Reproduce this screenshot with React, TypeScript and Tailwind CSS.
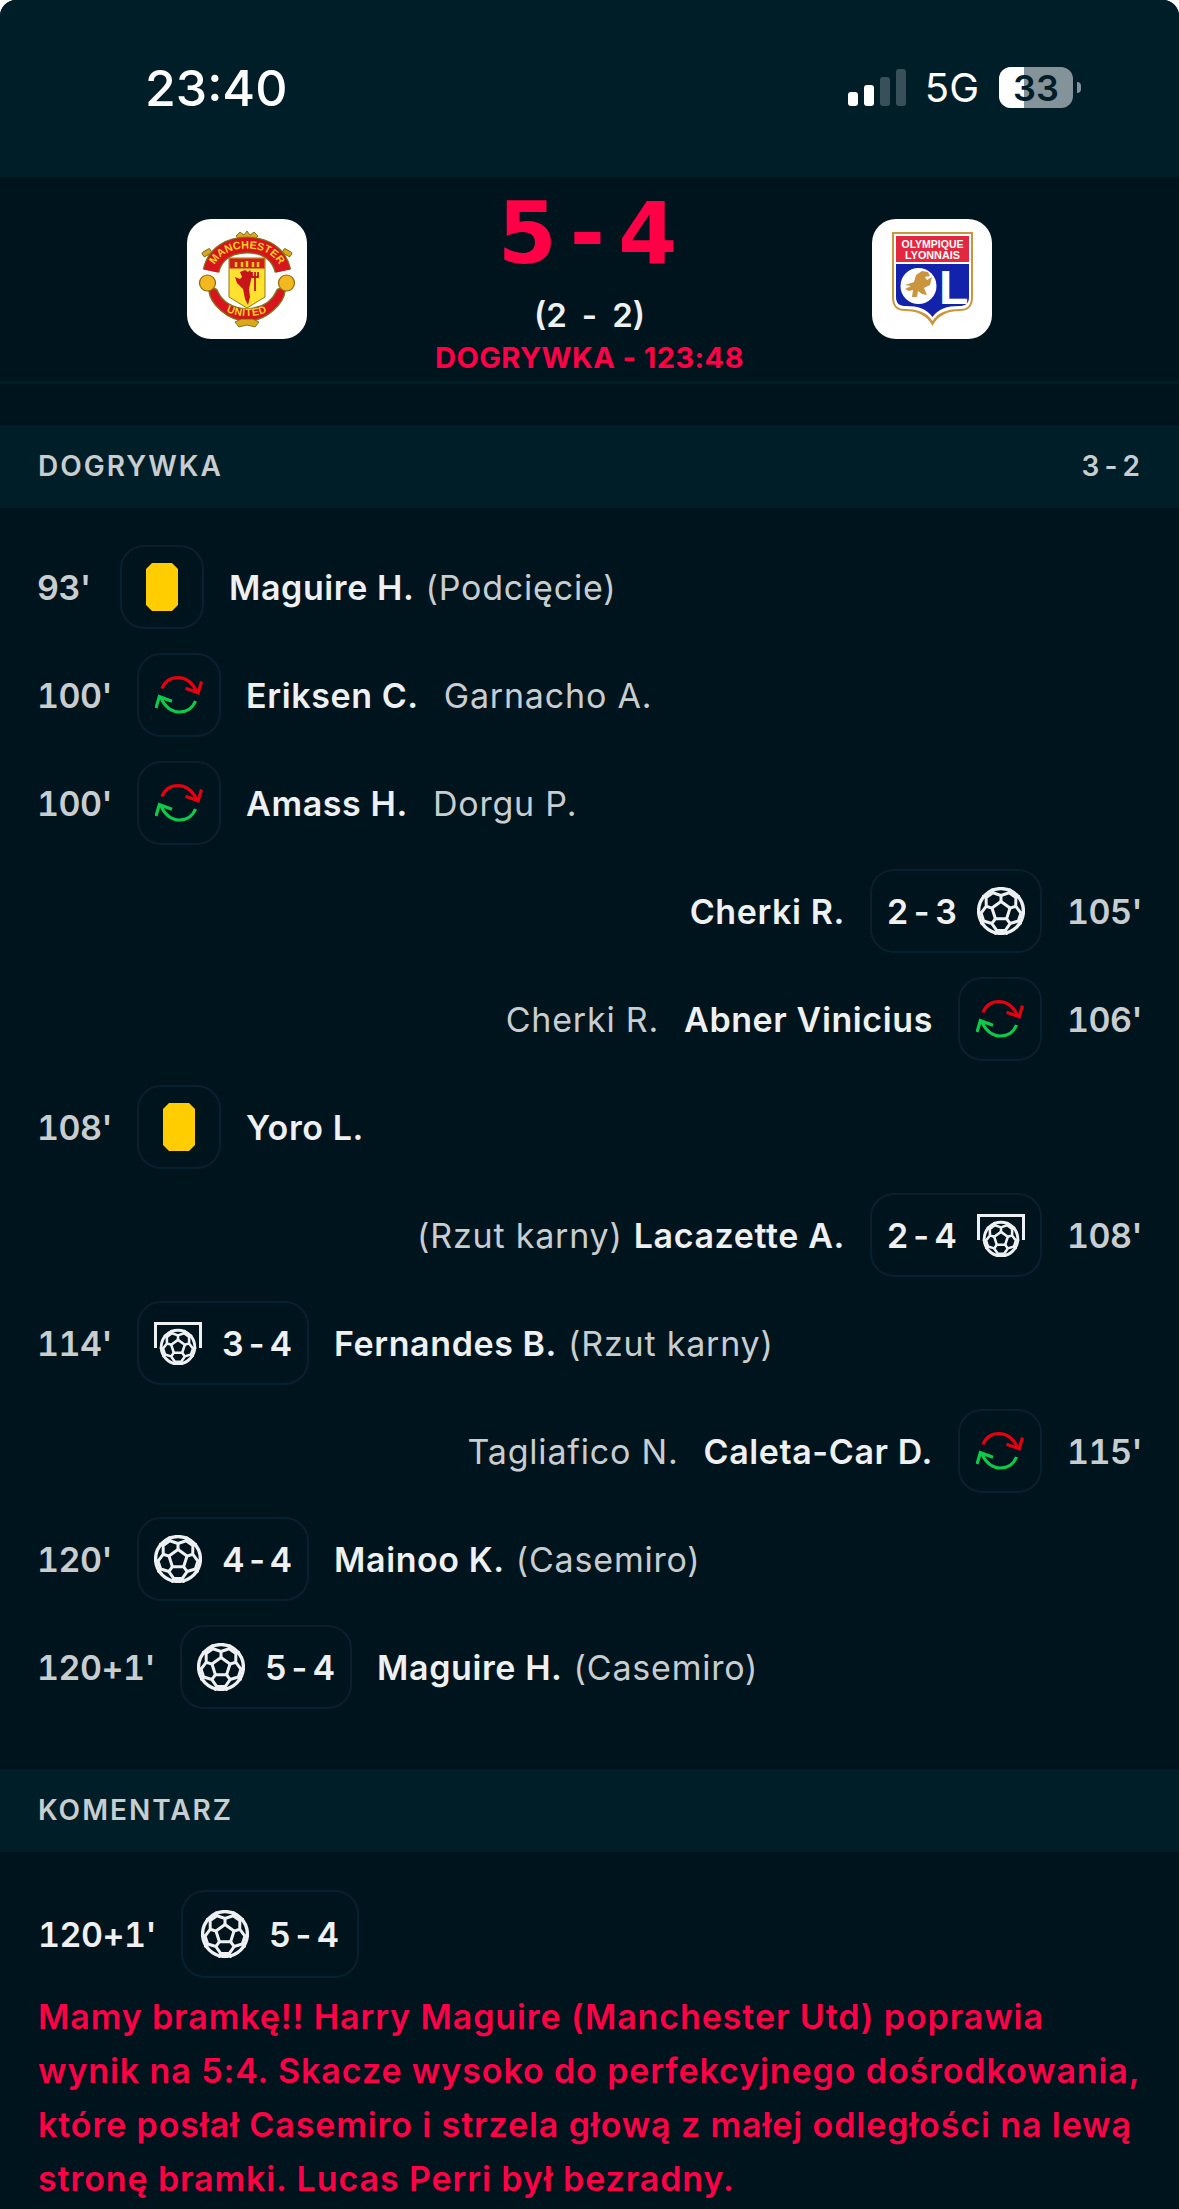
import React from "react";

const pt = (r: number, deg: number) => {
  const a = ((deg - 90) * Math.PI) / 180;
  return `${(24 + r * Math.cos(a)).toFixed(2)} ${(24 + r * Math.sin(a)).toFixed(2)}`;
};
const angles = [0, 72, 144, 216, 288];
const pent = angles.map((a) => pt(9.5, a)).join(" L");
const spokes = angles
  .map((a) => `M${pt(9.5, a)} L${pt(15.5, a)} L${pt(20, a - 24)} L${pt(23, a - 22)} M${pt(15.5, a)} L${pt(20, a + 24)} L${pt(23, a + 22)} M${pt(20, a + 24)} L${pt(20, a + 48)}`)
  .join(" ");

const BallShapes = ({ w }: { w: number }) => (
  <>
    <circle cx="24" cy="24" r="22.4" fill="none" stroke="#eef0f1" strokeWidth={w + 0.4} />
    <path d={`M${pent} Z`} fill="none" stroke="#eef0f1" strokeWidth={w} strokeLinejoin="round" />
    <path d={spokes} fill="none" stroke="#eef0f1" strokeWidth={w} strokeLinecap="round" strokeLinejoin="round" />
  </>
);

const Ball = () => (
  <svg width="48" height="48" viewBox="0 0 48 48" className="shrink-0">
    <BallShapes w={3} />
  </svg>
);

const GoalBall = () => (
  <svg width="48" height="43" viewBox="0 0 48 43" className="shrink-0">
    <path d="M1.5 26V1.5H46.5V26" fill="none" stroke="#eef0f1" strokeWidth="3" />
    <g transform="translate(6 7) scale(0.75)">
      <BallShapes w={3.4} />
    </g>
  </svg>
);

const Card = () => (
  <svg width="32" height="48" viewBox="0 0 32 48">
    <polygon points="6,0 26,0 32,6 32,42 26,48 6,48 0,42 0,6" fill="#ffcd00" />
  </svg>
);

const Sub = () => (
  <svg width="48" height="38" viewBox="0 0 48 38">
    <path d="M7 12.5C10 5 16 1.6 23 1.6C31 1.6 38 7 41.5 15.5" fill="none" stroke="#e4000f" strokeWidth="3.2" />
    <path d="M46.5 5.5L43.2 16.8L30.5 12.2" fill="none" stroke="#e4000f" strokeWidth="3.2" />
    <path d="M40.5 25C37.5 32.5 31 36 24.5 36C16.5 36 9.5 30.5 6 22" fill="none" stroke="#0ccb4b" strokeWidth="3.2" />
    <path d="M1 32L4.3 20.7L17 25.3" fill="none" stroke="#0ccb4b" strokeWidth="3.2" />
  </svg>
);

const ManUtd = () => (
  <svg width="120" height="120" viewBox="0 0 120 120" style={{ fontFamily: "'Liberation Sans', sans-serif" }}>
    <defs>
      <path id="mu-top" d="M25 52C30 36 44 29.500 60 29.500C76 29.500 90 36 95 52" />
      <path id="mu-bot" d="M25 80C35 94 48 97 60 97C72 97 85 94 95 80" />
    </defs>
    <path d="M49 17L53 13L57 16L60 12L63 16L67 13L71 17L66 22H54Z" fill="#d9a91a" stroke="#6d5a10" strokeWidth="0.8" />
    <rect x="15" y="31" width="9" height="5" rx="1" transform="rotate(-30 20 33)" fill="#d9a91a" stroke="#6d5a10" strokeWidth="0.8" />
    <rect x="96" y="31" width="9" height="5" rx="1" transform="rotate(30 100 33)" fill="#d9a91a" stroke="#6d5a10" strokeWidth="0.8" />
    <path d="M24 52C28 34 43 26 60 26C77 26 92 34 96 52" fill="none" stroke="#7e7420" strokeWidth="17" />
    <path d="M24 52C28 34 43 26 60 26C77 26 92 34 96 52" fill="none" stroke="#d8141c" strokeWidth="14.500" />
    <text fontSize="10.800" fontWeight="700" fill="#f7d321">
      <textPath href="#mu-top" startOffset="50%" textAnchor="middle">MANCHESTER</textPath>
    </text>
    <path d="M22 72C25 68 30 69 31 73C36 84 47 89 60 90C73 89 84 84 89 73C90 69 95 68 98 72C97 84 80 102 60 102C40 102 23 84 22 72Z" fill="#d8141c" stroke="#7e7420" strokeWidth="1.500" />
    <text fontSize="10.500" fontWeight="700" fill="#f7d321" letterSpacing="0.6">
      <textPath href="#mu-bot" startOffset="50%" textAnchor="middle">UNITED</textPath>
    </text>
    <path d="M42 39H78V78L60 89L42 78Z" fill="#ffe12e" stroke="#8f7a10" strokeWidth="1" />
    <rect x="42.500" y="39.500" width="35" height="10" fill="#cf1f1a" />
    <path d="M49 48V43M55 48V43M60 48V42M66 48V43M71 48V43" stroke="#f5c51f" strokeWidth="2.500" />
    <path d="M53 53L58 51L61 53L63 51L65 55L64 61L62 70L63 78L61 86L58 80L56 70L50 64L48 58L53 60L55 58Z" fill="#c6151b" />
    <path d="M68 53V72M65 53V58H71V53" stroke="#c6151b" strokeWidth="1.800" fill="none" />
    <circle cx="20.500" cy="64" r="8" fill="#f3b71f" stroke="#8c6a10" strokeWidth="1.200" />
    <circle cx="99.500" cy="64" r="8" fill="#f3b71f" stroke="#8c6a10" strokeWidth="1.200" />
    <path d="M48 103L54 100H66L72 103L68 108L60 106L52 108Z" fill="#d9a91a" stroke="#6d5a10" strokeWidth="0.8" />
  </svg>
);

const Lyon = () => (
  <svg width="120" height="120" viewBox="0 0 120 120" style={{ fontFamily: "'Liberation Sans', sans-serif" }}>
    <path d="M20 13H101V78C101 88 96 92 88 92C76 92 66 96 60.500 107C55 96 45 92 33 92C25 92 20 88 20 78Z" fill="#c9963f" />
    <path d="M22 15H99V78C99 87 95 90 88 90C76 90 66 93 60.500 102C55 93 45 90 33 90C26 90 22 87 22 78Z" fill="#fff" />
    <rect x="24" y="17" width="73" height="26" fill="#e3273f" />
    <path d="M24 45H97V78C97 85 93 87 87 87C75 87 66 90 60.500 98C55 90 46 87 34 87C28 87 24 85 24 78Z" fill="#1322ab" />
    <text x="60.500" y="29" textAnchor="middle" fontSize="10.500" fontWeight="700" fill="#fff">OLYMPIQUE</text>
    <text x="60.500" y="40" textAnchor="middle" fontSize="10.800" fontWeight="700" fill="#fff">LYONNAIS</text>
    <circle cx="46.500" cy="67" r="18" fill="#fff" />
    <path d="M33 66L42 63L44 56L50 52L56 53L58 57L53 58L55 61L60 58L58 66L52 69L55 76L50 75L46 72L45 78L40 78L41 71L37 72L33 70L39 67Z" fill="#c9963f" />
    <text x="67" y="85" fontSize="48" fontWeight="700" fill="#fff">L</text>
  </svg>
);

type Icon = "card" | "sub" | "ball" | "pen";
type Row = {
  t: string;
  side: "l" | "r";
  icon: Icon;
  score?: string[];
  name: string;
  extra?: string;
  sub?: string;
};

const rows: Row[] = [
  { t: "93'", side: "l", icon: "card", name: "Maguire H.", extra: "(Podcięcie)" },
  { t: "100'", side: "l", icon: "sub", name: "Eriksen C.", sub: "Garnacho A." },
  { t: "100'", side: "l", icon: "sub", name: "Amass H.", sub: "Dorgu P." },
  { t: "105'", side: "r", icon: "ball", score: ["2", "3"], name: "Cherki R." },
  { t: "106'", side: "r", icon: "sub", name: "Abner Vinicius", sub: "Cherki R." },
  { t: "108'", side: "l", icon: "card", name: "Yoro L." },
  { t: "108'", side: "r", icon: "pen", score: ["2", "4"], name: "Lacazette A.", extra: "(Rzut karny)" },
  { t: "114'", side: "l", icon: "pen", score: ["3", "4"], name: "Fernandes B.", extra: "(Rzut karny)" },
  { t: "115'", side: "r", icon: "sub", name: "Caleta-Car D.", sub: "Tagliafico N." },
  { t: "120'", side: "l", icon: "ball", score: ["4", "4"], name: "Mainoo K.", extra: "(Casemiro)" },
  { t: "120+1'", side: "l", icon: "ball", score: ["5", "4"], name: "Maguire H.", extra: "(Casemiro)" },
];

const IconOf = ({ i }: { i: Icon }) =>
  i === "card" ? <Card /> : i === "sub" ? <Sub /> : i === "ball" ? <Ball /> : <GoalBall />;

const Score = ({ s }: { s: string[] }) => (
  <span className="flex w-[70px] shrink-0 items-center justify-between text-[34px] font-semibold text-[#eef0f1]">
    <span>{s[0]}</span>
    <span>-</span>
    <span>{s[1]}</span>
  </span>
);

const Box = ({ r }: { r: Row }) => {
  const score = r.score ? <Score s={r.score} /> : null;
  return (
    <div className={`flex h-[84px] shrink-0 items-center justify-center rounded-[24px] border-2 border-[#07222e] ${r.score ? "w-[172px] gap-[20px]" : "w-[84px]"}`}>
      {r.side === "l" ? (
        <>
          <IconOf i={r.icon} />
          {score}
        </>
      ) : (
        <>
          {score}
          <IconOf i={r.icon} />
        </>
      )}
    </div>
  );
};

const EventRow = ({ r }: { r: Row }) => {
  const time = <span className="min-w-[58px] text-[34px] font-semibold tabular-nums tracking-[-0.5px] text-[#c8cdd0] whitespace-nowrap">{r.t}</span>;
  const name = <span className="text-[34px] font-semibold tracking-[0.6px] text-[#eef0f1] whitespace-nowrap">{r.name}</span>;
  const extra = r.extra ? <span className="text-[34px] tracking-[0.8px] text-[#c8cdd0] whitespace-nowrap">{r.extra}</span> : null;
  const sub = r.sub ? <span className="text-[34px] tracking-[0.8px] text-[#c8cdd0] whitespace-nowrap">{r.sub}</span> : null;
  if (r.side === "l") {
    return (
      <div className="flex h-[84px] items-center gap-[25px]">
        {time}
        <Box r={r} />
        <div className={`flex items-center ${r.sub ? "gap-[25px]" : "gap-[11px]"}`}>
          {name}
          {extra}
          {sub}
        </div>
      </div>
    );
  }
  return (
    <div className="flex h-[84px] items-center justify-end gap-[25px]">
      <div className={`flex items-center ${r.sub ? "gap-[25px]" : "gap-[11px]"}`}>
        {sub}
        {extra}
        {name}
      </div>
      <Box r={r} />
      {time}
    </div>
  );
};

const Section = ({ left, right }: { left: string; right?: string }) => (
  <div className="flex h-[83px] items-center justify-between bg-[#001e28] px-[38px] pb-[2px] text-[28px] font-semibold tracking-[2px] text-[#c8cdd0]">
    <span>{left}</span>
    {right && <span className="tracking-[1px] [word-spacing:-4px]">{right}</span>}
  </div>
);

export default function App() {
  return (
    <div className="h-[2209px] w-[1179px] overflow-hidden bg-white font-['Inter',sans-serif]">
      <div className="h-full rounded-t-[16px] bg-[#00141e]">
        <div className="flex h-[177px] items-start justify-between rounded-t-[16px] bg-[#001e28] pl-[145px] pr-[98px] pt-[58px]">
          <span className="text-[50px] font-medium leading-[60px] text-white">23:40</span>
          <div className="mt-[9px] flex items-center">
            <div className="flex items-end gap-[6px]">
              <div className="h-[14px] w-[10px] rounded-[3px] bg-white" />
              <div className="h-[21px] w-[10px] rounded-[3px] bg-white" />
              <div className="h-[29px] w-[10px] rounded-[3px] bg-[#37505a]" />
              <div className="h-[37px] w-[10px] rounded-[3px] bg-[#37505a]" />
            </div>
            <span className="ml-[19px] text-[40px] leading-[40px] text-white">5G</span>
            <div className="relative ml-[20px] flex h-[41px] w-[74px] items-center justify-center overflow-hidden rounded-[12px] bg-[#84929a]">
              <div className="absolute inset-y-0 left-0 w-[25px] bg-white" />
              <span className="relative text-[36px] font-semibold leading-[40px] text-[#001e28]">33</span>
            </div>
            <div className="ml-[4px] h-[11px] w-[4px] rounded-r-full bg-[#84929a]" />
          </div>
        </div>

        <div className="flex h-[207px] items-start justify-between border-b-[3px] border-[#001e28] pl-[187px] pr-[187px]">
          <div className="mt-[42px] h-[120px] w-[120px] overflow-hidden rounded-[24px] bg-white">
            <ManUtd />
          </div>
          <div className="flex flex-col items-center pt-[5px]">
            <div className="-ml-[4px] flex items-center gap-[13px] font-['DejaVu_Sans',sans-serif] text-[85px] font-bold leading-[104px] text-[#ff0046]">
              <span>5</span>
              <span>-</span>
              <span>4</span>
            </div>
            <div className="mt-[8px] flex items-center gap-[15px] text-[33px] font-semibold leading-[42px] text-[#eef0f1]">
              <span>(2</span>
              <span>-</span>
              <span>2)</span>
            </div>
            <div className="mt-[4px] whitespace-nowrap text-[29px] font-bold leading-[36px] tracking-[0.4px] text-[#ff0046]">DOGRYWKA - 123:48</div>
          </div>
          <div className="mt-[42px] h-[120px] w-[120px] overflow-hidden rounded-[24px] bg-white">
            <Lyon />
          </div>
        </div>

        <div className="mt-[41px]">
          <Section left="DOGRYWKA" right="3 - 2" />
        </div>
        <div className="flex flex-col gap-[24px] pb-[60px] pl-[37px] pr-[37px] pt-[37px]">
          {rows.map((r, i) => (
            <EventRow key={i} r={r} />
          ))}
        </div>
        <Section left="KOMENTARZ" />
        <div className="px-[38px] pt-[38px]">
          <div className="flex items-center gap-[25px]">
            <span className="text-[34px] font-semibold tabular-nums tracking-[-0.5px] text-[#eef0f1]">120+1'</span>
            <div className="flex h-[88px] w-[178px] items-center justify-center gap-[20px] rounded-[24px] border-2 border-[#07222e]">
              <Ball />
              <Score s={["5", "4"]} />
            </div>
          </div>
          <p className="mt-[12px] text-[34px] font-semibold leading-[54px] tracking-[0.9px] text-[#ff0046]">
            Mamy bramkę!! Harry Maguire (Manchester Utd) poprawia wynik na 5:4. Skacze wysoko do perfekcyjnego dośrodkowania, które posłał Casemiro i strzela głową z małej odległości na lewą stronę bramki. Lucas Perri był bezradny.
          </p>
        </div>
      </div>
    </div>
  );
}
